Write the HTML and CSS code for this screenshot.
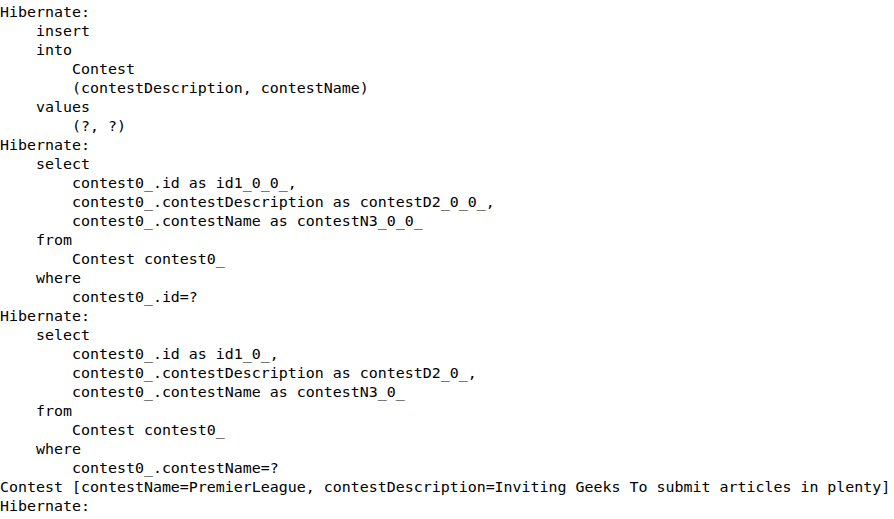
FILE: index.html
```html
<!DOCTYPE html>
<html>
<head>
<meta charset="utf-8">
<link rel="stylesheet" href="styles.css">
</head>
<body>
<pre class="console">Hibernate:
    insert
    into
        Contest
        (contestDescription, contestName)
    values
        (?, ?)
Hibernate:
    select
        contest0_.id as id1_0_0_,
        contest0_.contestDescription as contestD2_0_0_,
        contest0_.contestName as contestN3_0_0_
    from
        Contest contest0_
    where
        contest0_.id=?
Hibernate:
    select
        contest0_.id as id1_0_,
        contest0_.contestDescription as contestD2_0_,
        contest0_.contestName as contestN3_0_
    from
        Contest contest0_
    where
        contest0_.contestName=?
Contest [contestName=PremierLeague, contestDescription=Inviting Geeks To submit articles in plenty]
Hibernate:
    select</pre>
</body>
</html>
```
FILE: styles.css
```css
html, body {
  margin: 0;
  padding: 0;
  background: #ffffff;
  width: 894px;
  height: 519px;
  overflow: hidden;
}
.console {
  margin: 0;
  padding: 3px 0 0 0;
  font-family: "DejaVu Sans Mono", "Liberation Mono", monospace;
  font-size: 14.95px;
  line-height: 19px;
  color: #000000;
  white-space: pre;
}
```
